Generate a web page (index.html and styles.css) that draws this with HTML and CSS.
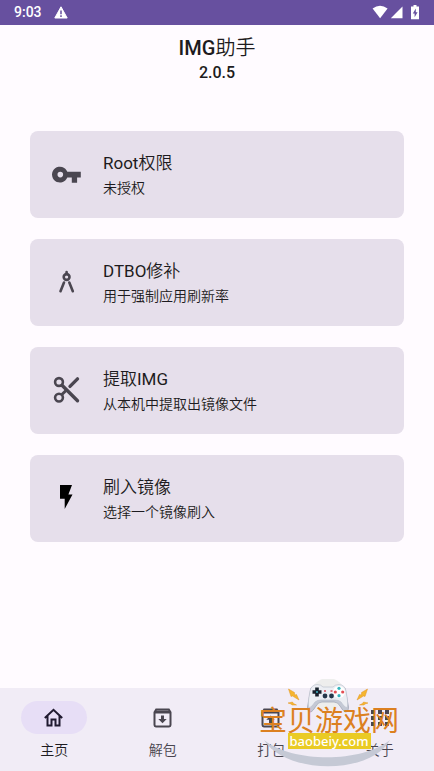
FILE: index.html
```html
<!DOCTYPE html>
<html lang="zh-CN">
<head>
<meta charset="utf-8">
<meta name="viewport" content="width=device-width, initial-scale=1">
<title>IMG助手</title>
<link rel="stylesheet" href="styles.css">
</head>
<body>
<div class="app">
  <div class="status">
    <span class="time">9:03</span>
    <svg class="warn" width="14" height="13" viewBox="0 0 14 13"><path fill="#fff" stroke="#fff" stroke-linejoin="round" d="M7 .8 13.2 12H.8z"/><path d="M7 4.5v3.8M7 9.3v1.6" stroke="#67509f" stroke-width="1.5"/></svg>
    <svg class="signals" width="48" height="15" viewBox="0 0 48 15" fill="#fff"><path d="M.6 3.6Q8-2.3 15.6 3.6L8.1 13.2z"/><path d="M18.800 13.300 30.500 1.500v11.800z"/><path d="M41.500 0h3v1.500H47v12.700h-8V1.500h2.500z"/><path fill="#67509f" d="m43.800 3.500-3 5h1.800v3.800l3-5h-1.800z"/></svg>
  </div>
  <header class="heading">
    <h1>IMG助手</h1>
    <p>2.0.5</p>
  </header>
  <main class="cards">
    <button class="card" type="button">
      <svg class="icon" width="32" height="32" viewBox="0 0 32 32"><path fill="#4a4650" fill-rule="evenodd" d="M17.300 12.800a7.900 7.900 0 1 0 0 5.600h4.500v5.300h5.300v-5.300h3.700v-5.600zM10.300 18.400a2.800 2.800 0 1 1 0-5.600 2.800 2.800 0 0 1 0 5.600z"/></svg>
      <span class="text"><span class="title">Root权限</span><span class="sub">未授权</span></span>
    </button>
    <button class="card" type="button">
      <svg class="icon" width="32" height="32" viewBox="0 0 32 32" fill="none" stroke="#4a4650" stroke-width="2.600" stroke-linecap="round"><circle cx="16.600" cy="10" r="2.900"/><path d="M16.600 5v2M14 15.500l-3.500 8.700M19.300 15.500l3.500 8.700"/></svg>
      <span class="text"><span class="title">DTBO修补</span><span class="sub">用于强制应用刷新率</span></span>
    </button>
    <button class="card" type="button">
      <svg class="icon" width="32" height="32" viewBox="0 0 32 32" fill="none" stroke="#4a4650" stroke-width="2.600"><circle cx="9" cy="7" r="3.900"/><circle cx="9" cy="22.600" r="3.900"/><path stroke-width="3.400" stroke-linecap="round" d="m12 10.200 15.500 15.500M20 11.400l7.500-7.500"/><path stroke-width="3" d="m11.700 19.800 4.800-4.800"/></svg>
      <span class="text"><span class="title">提取IMG</span><span class="sub">从本机中提取出镜像文件</span></span>
    </button>
    <button class="card" type="button">
      <svg class="icon" width="32" height="32" viewBox="0 0 32 32"><path d="M10 2h12l-3.600 9.500h4.100L14.700 26V15.800H10z"/></svg>
      <span class="text"><span class="title">刷入镜像</span><span class="sub">选择一个镜像刷入</span></span>
    </button>
  </main>
  <nav class="nav">
    <a class="item active" href="#home"><span class="pill"><svg width="22" height="22" viewBox="0 0 22 22" fill="none" stroke="#201a30" stroke-width="2"><path d="m1.800 11 8.700-8.200 8.700 8.200M4.500 8.800v9.600h4v-6h4v6h4V8.800"/></svg></span><span>主页</span></a>
    <a class="item" href="#unpack"><span class="pill"><svg width="22" height="22" viewBox="0 0 22 22" fill="none" stroke="#4a4650" stroke-width="2"><path d="M2.500 5.300V18q0 1.400 1.400 1.400h13.200q1.400 0 1.400-1.400V5.300L16.800 2.500H4.200zM2.500 5.600h16"/><path d="M3.500 4.500h14"/><path fill="#4a4650" stroke="none" d="M9 8.500h3V12h2.700l-4.200 4.200L6.300 12H9z"/></svg></span><span>解包</span></a>
    <a class="item" href="#pack"><span class="pill"><svg width="22" height="22" viewBox="0 0 22 22" fill="none" stroke="#4a4650" stroke-width="2"><path d="M2.500 5.300V18q0 1.400 1.400 1.400h13.200q1.400 0 1.400-1.400V5.300L16.800 2.500H4.200zM2.500 5.600h16"/><path d="M3.500 4.500h14"/><path fill="#4a4650" stroke="none" d="M9 16.200h3v-3.500h2.700L10.500 8.500l-4.200 4.200H9z"/></svg></span><span>打包</span></a>
    <a class="item" href="#about"><span class="pill"><svg width="22" height="22" viewBox="0 0 22 22" fill="#4a4650"><path d="M2 3h4v4H2zm7 0h4v4H9zm7 0h4v4h-4zM2 9h4v4H2zm7 0h4v4H9zm7 0h4v4h-4zM2 15h4v4H2zm7 0h4v4H9zm7 0h4v4h-4z"/></svg></span><span>关于</span></a>
    <div class="brand">
      <svg class="art" width="140" height="92" viewBox="0 0 140 92">
        <ellipse cx="69" cy="15" rx="17" ry="16" fill="#eeeeed"/>
        <path fill="#c4c9d5" stroke="#a3a9b8" stroke-width=".8" d="M52 9 48.500 28Q48.500 33 52 33 54 32 57 27 59 23 63 23H75Q79 23 81 27 84 32 86 33 89.500 33 89.500 28L86 9z"/>
        <path fill="#eceef3" stroke="#b7bcc9" stroke-width=".6" d="M51 12Q52 6 58 5.500 62 5.500 64 8H74Q76 5.500 80 5.500 86 6 87 12L88.500 21Q89 27 88 29 85 28 82 23 80 21 76 21H62Q58 21 56 23 53 28 50 29 49 27 49.500 21z"/>
        <path d="M58 8.500v9M53.500 13h9" stroke="#18212c" stroke-width="3.600"/><circle cx="58" cy="13" r="1" fill="#42b6c5"/>
        <circle cx="80" cy="13" r="6" fill="#fff"/>
        <g fill="#e34d52"><circle cx="76.300" cy="13" r="1.600"/><circle cx="83.700" cy="13" r="1.600"/></g><g fill="#36b5bd"><circle cx="80" cy="9.300" r="1.600"/><circle cx="80" cy="16.700" r="1.600"/></g>
        <circle cx="66" cy="17" r="2.400" fill="#26384a"/><circle cx="72.500" cy="17" r="2.400" fill="#26384a"/>
        <path d="M65 12h2M71.500 12h2" stroke="#d84956" stroke-width="1.500"/>
        <g fill="#f5b52f" stroke="#e39425" stroke-width=".5"><path d="m29.500 10 6 3.500v2.500l2-.5 2.500 5.500-6.500-4-1.500.5zM29 24l4.500-1 1 1.500 3 1.500-4.500 0-1-1zM108.500 10l-6 3.500v2.500l-2-.5-2.500 5.500 6.500-4 1.500.5zM109 24l-4.500-1-1 1.500-3 1.500h4.500l1-1z"/></g>
        <path fill="#c5c9d5" d="M5 61C33 84 103 84 131 61 112 96 27 96 5 61z"/>
      </svg>
      <div class="name">宝贝游戏网</div>
      <div class="site">baobeiy.com</div>
    </div>
  </nav>
</div>
</body>
</html>
```
FILE: styles.css
```css
* { box-sizing: border-box; }
body {
  margin: 0;
  background: #fffbff;
  color: #1d1b20;
  font-family: Roboto, "Noto Sans CJK SC DemiLight", "Noto Sans CJK SC", sans-serif;
}
.app { min-height: 100vh; display: flex; flex-direction: column; }
.status {
  height: 25px;
  padding: 0 14px;
  background: #67509f;
  color: #fff;
  display: flex;
  align-items: center;
}
.time { font-size: 14px; font-weight: 500; line-height: 25px; }
.warn { margin-left: 12px; }
.signals { margin-left: auto; }
.heading { padding-top: 10px; text-align: center; }
h1, p { margin: 0; font-weight: 500; }
h1 { font-size: 20px; line-height: 26px; }
p { font-size: 16px; line-height: 24px; }
.cards { padding: 46px 30px 32px; display: flex; flex-direction: column; gap: 21px; }
.card {
  min-height: 87px;
  padding: 0 20px;
  border: 0;
  border-radius: 8px;
  background: #e6dfeb;
  color: inherit;
  font: inherit;
  text-align: left;
  display: flex;
  align-items: center;
  gap: 21px;
}
.icon { flex: none; }
.text { display: flex; flex-direction: column; }
.title { font-size: 17px; line-height: 26px; }
.sub { font-size: 14px; line-height: 24px; }
.nav {
  position: relative;
  min-height: 83px;
  margin-top: auto;
  padding-top: 13px;
  background: #f1ecf6;
  display: grid;
  grid-template-columns: repeat(4, 1fr);
}
.item {
  display: flex;
  flex-direction: column;
  align-items: center;
  gap: 6px;
  color: #49454f;
  font-size: 14px;
  line-height: 20px;
  text-decoration: none;
}
.pill { width: 66px; height: 33px; border-radius: 17px; display: grid; place-items: center; }
.active { color: #1d1b20; }
.active .pill { background: #e7def6; }
.brand {
  position: absolute;
  right: 35px;
  bottom: 0;
  width: 140px;
  height: 92px;
  padding-top: 26px;
  display: flex;
  flex-direction: column;
  align-items: center;
  pointer-events: none;
}
.art { position: absolute; inset: 0; }
.name { position: relative; color: #dc8020; font: 400 28px/28px "Noto Sans CJK SC", sans-serif; white-space: nowrap; }
.site {
  position: relative;
  padding: 0 2px;
  background: #eacb24;
  color: #fff;
  font: 500 13px/16px "Noto Sans", sans-serif;
}
```
